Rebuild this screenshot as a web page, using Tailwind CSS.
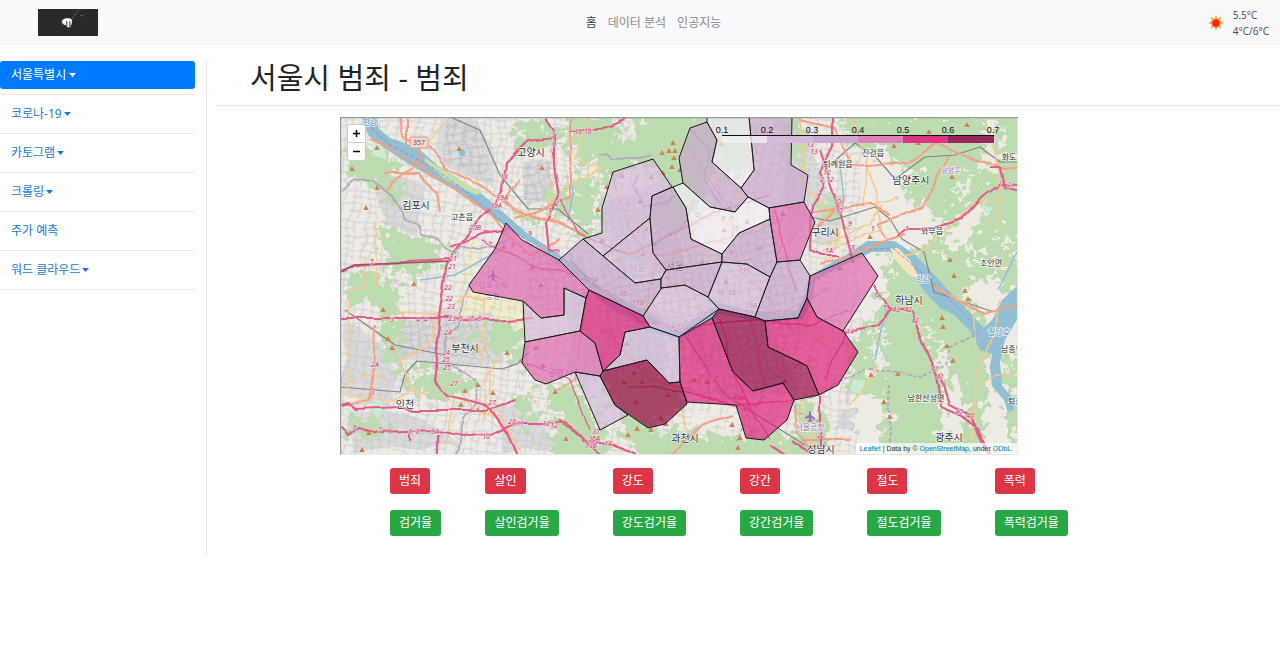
<!DOCTYPE html>
<html lang="ko">
<head>
<meta charset="utf-8">
<meta name="viewport" content="width=device-width, initial-scale=1">
<title>서울시 범죄</title>
<script src="https://cdn.jsdelivr.net/npm/@tailwindcss/browser@4"></script>
</head>
<body class="min-h-screen bg-white font-['Open_Sans','Noto_Sans_CJK_KR',sans-serif] text-xs text-[#212529]">
<header class="grid h-[45px] grid-cols-[1fr_auto_1fr] items-center bg-[#f8f9fa] pr-[11px] pl-[38px]">
  <a href="#" aria-label="홈으로" class="w-[60px]">
    <svg class="block w-full" viewBox="0 0 60 27" aria-hidden="true">
      <rect width="60" height="27" fill="#292929"/>
      <path d="M34 10l4-6 4-5" stroke="#777" stroke-width=".8" stroke-dasharray="3 1" fill="none"/>
      <path d="M42 7l3-1" stroke="#777" stroke-width=".8"/>
      <path d="M23.500 13c0-4 9-5 10.500-2 .5 3 0 5-2 8-2 0-4-1-4.500-3-2 0-4-1-4-3z" fill="#7c7c7c"/>
      <path d="M24 13c0-4 8-5 10-2l-.5 4-1 1v-4h-1.500v6h-1.500v-6h-1.500v4l-2-.5z" fill="#fff"/>
    </svg>
  </a>
  <nav class="flex gap-[11px]">
    <a href="#" class="text-[#3f4245]">홈</a>
    <a href="#" class="text-[#8b8d8f]">데이터 분석</a>
    <a href="#" class="text-[#8b8d8f]">인공지능</a>
  </nav>
  <div class="flex items-center gap-[9px] justify-self-end text-[10px] leading-4 text-[#45484b]">
    <svg class="size-4" viewBox="0 0 16 16" aria-hidden="true">
      <path d="M8 0l1.500 3.500L13.600 2l-1.400 4L16 8l-3.800 1.600 1.400 4.100-4.100-1.500L8 16l-1.500-3.800-4.100 1.500 1.400-4.100L0 8l3.800-2-1.400-4 4.100 1.500z" fill="#f8ad55"/>
      <circle cx="8" cy="8" r="4.300" fill="#ff6a22"/><circle cx="8" cy="8.300" r="3.500" fill="#f52a0c"/>
    </svg>
    <p>5.5°C<br>4°C/6°C</p>
  </div>
</header>

<div class="flex pt-4">
  <aside class="w-[207px] shrink-0 border-r border-[#e6e6e6] pr-[11px]">
    <ul class="min-h-[494px] text-[#1878d0]">
      <li class="border-b border-[#ececec] pb-[5px]"><button class="flex h-[28px] w-full items-center gap-[3px] rounded-[3px] bg-[#007bff] px-[11px] text-white">서울특별시<svg class="w-[7px] shrink-0" viewBox="0 0 7 4"><path d="M0 0h7L3.500 4z" fill="currentColor"/></svg></button></li>
      <li class="border-b border-[#ececec] py-[5px]"><button class="flex h-[28px] w-full items-center gap-[2px] px-[11px]">코로나-19<svg class="w-[7px] shrink-0" viewBox="0 0 7 4"><path d="M0 0h7L3.500 4z" fill="currentColor"/></svg></button></li>
      <li class="border-b border-[#ececec] py-[5px]"><button class="flex h-[28px] w-full items-center gap-[2px] px-[11px]">카토그램<svg class="w-[7px] shrink-0" viewBox="0 0 7 4"><path d="M0 0h7L3.500 4z" fill="currentColor"/></svg></button></li>
      <li class="border-b border-[#ececec] py-[5px]"><button class="flex h-[28px] w-full items-center gap-[2px] px-[11px]">크롤링<svg class="w-[7px] shrink-0" viewBox="0 0 7 4"><path d="M0 0h7L3.500 4z" fill="currentColor"/></svg></button></li>
      <li class="border-b border-[#ececec] py-[5px]"><a href="#" class="flex h-[28px] items-center px-[11px]">주가 예측</a></li>
      <li class="border-b border-[#ececec] py-[5px]"><button class="flex h-[28px] w-full items-center gap-[2px] px-[11px]">워드 클라우드<svg class="w-[7px] shrink-0" viewBox="0 0 7 4"><path d="M0 0h7L3.500 4z" fill="currentColor"/></svg></button></li>
    </ul>
  </aside>

  <main class="min-w-0 flex-1 pl-[9px]">
    <h1 class="border-b border-[#e5e5e5] pb-[11px] pl-[34px] text-[29px] leading-[33px] font-normal">서울시 범죄 - 범죄</h1>

    <div class="relative mt-[11px] ml-[124px] max-w-[678px]">
      <svg class="block w-full" viewBox="340 117 678 338" font-family="Noto Sans CJK KR, sans-serif" role="img" aria-label="서울시 구별 범죄 지도">
        <defs>
          <filter id="rough" x="-5%" y="-5%" width="110%" height="110%"><feTurbulence type="fractalNoise" baseFrequency=".1" numOctaves="4" seed="8" result="n"/><feDisplacementMap in="SourceGraphic" in2="n" scale="42" xChannelSelector="R" yChannelSelector="G"/></filter>
          <filter id="wave" x="-5%" y="-5%" width="110%" height="110%"><feTurbulence type="fractalNoise" baseFrequency=".03" numOctaves="2" seed="3" result="n"/><feDisplacementMap in="SourceGraphic" in2="n" scale="14" xChannelSelector="R" yChannelSelector="G"/></filter>
          <filter id="bend" x="-5%" y="-5%" width="110%" height="110%"><feTurbulence type="fractalNoise" baseFrequency=".04" numOctaves="1" seed="5" result="n"/><feDisplacementMap in="SourceGraphic" in2="n" scale="8" xChannelSelector="R" yChannelSelector="G"/></filter>
          <pattern id="grid" width="17" height="15" patternUnits="userSpaceOnUse" patternTransform="rotate(8)"><path d="M0 3h17M4 0v15M0 10h11M11 3v12" stroke="#c3c2c4" stroke-width=".7" fill="none"/></pattern>
          <pattern id="dense" width="8" height="8" patternUnits="userSpaceOnUse" patternTransform="rotate(-12)"><path d="M0 2h8M3 0v8" stroke="#b6b6ba" stroke-width=".8" fill="none"/></pattern>
          <path id="t" d="M0-3l2.800 5h-5.600z" fill="#cd8450"/>
          <path id="plane" d="M0-5l1 1v3l4 3v1l-4-1.500V4l1.500 1v1L0 5.500-2.500 6V5L-1 4V1.500L-5 3V2l4-3v-3z" fill="#8a6cc5"/>
        </defs>
        <rect x="340" y="117" width="678" height="338" fill="#eeebe5"/>

        <!-- built-up land -->
        <g fill="#dbdadb" filter="url(#wave)">
          <path d="M440 120l35 3 20 30-5 32-52-22zM523 162l22-3 8 35-25 15zM375 172l50 15-8 45-32-4zM395 320l65-12 50 5-5 50-70 5-45-12zM345 320l50 35-5 60-45-25zM350 410l70 5 40 30-110 8zM603 200l60-20 20 90-60 10zM570 290l90 20 10 60-100 10zM680 330l90-10 30 70-80 10zM780 120l30 10 15 60-35 60zM820 190l25 5-5 45-25 0zM895 285l30 5 5 20-30 5zM850 390l25 15-15 30-25-5zM930 145l25-5v15l-30 5zM495 405l40 10 30 35-60 0zM985 120l15 10v40l-15-10z"/>
        </g>
        <path d="M490 290l33 12 1 40-15 0-18-30-35 5 5-35zM471 237l-15 60 12 2 8-60z" fill="#f0edcb"/>
        <rect x="340" y="117" width="520" height="338" fill="url(#grid)" filter="url(#wave)"/>
        <path d="M445 120l35 10 10 50-45-20zM523 162h28v40h-25zM395 318h95v40h-95zM600 200l80-10 30 80 60-50 40 100-30 70-100 5-80-20zM525 240l60 20v60l-60-20z" fill="url(#dense)" filter="url(#wave)"/>

        <!-- woodland -->
        <g fill="#bddbb1" filter="url(#rough)">
          <path d="M640 112h85l-15 60-20 60-20 0-10-30 5-20-18-20-45 20-6-20 30-20zM565 118l60 0-10 35-25 15-22-20zM575 170l25 10 0 50-20 5-12-25z"/>
          <path d="M720 110h30l5 50-20 25-20-30zM785 110h15l5 55-15 5z"/>
          <path d="M835 112h190v140l-50 30-25 30 50 60-20 90h-80l-25-25 20-50-30 10-20-40 25-40 20-40-5-20 40-10 20-30-40-20-10-40-40-10z"/>
          <path d="M865 325l110-20 15 60-10 80-95 5-10-45-35-15 20-25z"/>
          <path d="M818 195l25 3-2 25-22 0zM858 120l40 0-15 20zM900 300l60-30 10 30z"/>
          <path d="M345 152l30-5 25 22-15 22-40-15zM385 175l20 12-3 20-20-5zM375 228l45 5 35 25-55 20-15-20zM345 272l50 8 2 25-50-2zM378 288l20 10 6 75-20-12zM410 372l50-5 20 25-35 10-40-8zM490 318l32 8v38l-32-8zM545 185l30 15-5 20-25-5zM520 205l15 10-10 15zM515 125l50 0-10 22-40 5z"/>
          <path d="M540 385l35-2 30 50 10 35-65 0 5-50zM602 380l50-10 30 35-30 25 80 5 80 0 10 30-180 5-20-45zM795 400l20 5 20 35-35 15zM345 420l30-5 20 20-45 5zM455 330l25 5-5 15zM520 390l15 15-5 30-15-25z"/>
          <path d="M1000 190l18-20v150l-18-30zM1005 360l15-5v90l-15-10z"/>
        </g>
        <g fill="#eeebe4" filter="url(#rough)">
          <path d="M940 235l25-25 25-10-15 30-30 25zM875 165l40 0 10 12-30 10zM965 165l10 20-12 8zM1000 228l15 15-12 3zM875 315l10 60-14-3zM925 318l25 48-12 3zM950 190l25 0-15 12zM855 255l20-10-10 20zM985 120l15 0-5 55-12-3zM940 395l20-15 10 55-25 0zM690 415l60 5-25 10-35-5zM990 330l12 100-20 5zM850 395l30 0 10 25-30 25zM960 240l20 10-5 15z"/>
        </g>
        <g fill="#c9ecd4"><path d="M372 140l12 8 3 12-14-5zM455 145l10 12-8 0zM375 395l10 12-8 12-5-10zM453 400l12 5-5 8zM500 230l8 5-3 8zM853 380l12 0-3 15-12-5zM980 205l14 3-7 7z"/></g>

        <!-- water -->
        <g fill="#92bfd3">
          <path d="M361 117L378 117 378 128 390 138 418 148 437 165 463 182 483 195 497 207 527 233 560 255 600 286 640 309 679 329 719 303 755 312 797 311 805 294 809 276 849 253 867 241 894 241 913 253 931 271 947 289 960 302 974 317 984 328 992 320 1002 300 1018 285 1018 318 1005 340 1000 362 1002 385 1014 400 1014 410 1008 412 1004 400 992 386 990 366 992 354 980 350 970 331 954 315 940 308 925 292 912 275 898 260 890 252 872 252 850 262 815 280 813 298 803 319 765 323 719 314 700 328 679 340 650 330 610 308 590 292 570 272 540 248 513 232 490 215 473 202 450 187 433 178 407 163 383 147 368 135Z"/>
          <path d="M570 168l3 25-5 28M765 375l-4 25M840 165l4 35-4 18M887 310l-6 20-6 30M1018 250l-20 40M500 250l-45 25-35 5" fill="none" stroke="#92bfd3" stroke-width="1.500"/>
          <circle cx="462" cy="153" r="3.500"/>
        </g>
        <path d="M425 158l28 18 30 17-7 2-30-15-21-18z" fill="#c8dfa9"/>
        <path d="M890 248l8 0 12 12 10 20-12-6-14-16z" fill="#f6e4c1"/>
        <path d="M366 117L373 130 390 145 430 166 460 187 500 220 550 259 600 293 679 334 719 308 797 315 810 285 860 250 893 248 930 280 975 325" fill="none" stroke="#8797bd" stroke-width="1" stroke-dasharray="4 2"/>

        <!-- administrative limits -->
        <g fill="none" stroke="#b1a0bb" stroke-width="1.800" opacity=".85" filter="url(#bend)">
          <path d="M340 190l14-12 18 3 20 15 8 12 4 12 15 5 3 10 15 3 7 10 12 5 4-8 18 4 18-5 12-4M472 280l-10 15-2 30-16 10 2 28 9 5 20 12 2 24-12 15-10 40M600 155l8-2 5 6 25-1 15-4M640 175l-5 10 10 20 20 0 10-10M690 130l20 20-5 30 15 25M695 200l-15 30"/>
          <path d="M795 400l2 15 20 5 10 30M870 370l30 2 20 5 25-12 5-18 30-15M865 370l-40 20-20 10M890 385l0 60M765 395l-20 22-8 25" stroke-dasharray="4 2"/>
        </g>
        <g fill="none" stroke="#858585" stroke-width="1.200" stroke-linejoin="round">
          <path d="M450 117l30 13 20 45 28 34h30l30 25M340 387l60 5 5-18 12-13 85 8 15-5 12-12M830 165l25-22 20 13 20 23 30-22 30-2 25-8 20 15 20 0M810 217l20 4 45-14 15 12 12 20 22 13 10 40 60 20M345 310l50 35 50 10M570 260l40 40 75 35 40 60 80 50"/>
        </g>

        <!-- secondary roads -->
        <g fill="none" stroke="#f8c98d" stroke-width="1.500" filter="url(#bend)">
          <path d="M349 300v90M375 223l2 65M349 288h15v-30M450 117l-20 25-8-2M555 165l-8 50 12 12M590 118l-15 40 28 10-40 20M395 312l50 2 18-20 20 8M485 295l-4 70M340 395l55 5 15-10 55 10 15 12 20 5 20 35M455 395l-10 50M492 370l0 50M410 390l-10-30 30-15 5-35M497 360l-10 20-2 40M345 385l20-10 20 2"/>
          <path d="M800 117l5 70 25 30M850 117l15 40-2 50 35-10M863 160l12 30 8 40-60 20M985 125l14 45 0 60M999 200l-25 3-20 22-30 25-20 5M976 385l-3 55M975 380l20-50 5-30M976 385l20-10 25-1M933 285l40 25 3 40M820 245l50-20 12-20M815 305l-10 20 20 20M850 405l30-40M830 260l10-30M800 400l15 55M735 195l10-25 0-50M690 440l-10-25-18-5"/>
        </g>
        <g fill="none" stroke="#f4a086" stroke-width="2" stroke-linejoin="round" filter="url(#bend)">
          <path d="M400 117l3 20 28 10 15 22 40 20 30 22 50 14M407 117v28M421 143l-3 20-25 18-6 10M371 140l20 10 40 25 55 35 20 22M383 173l35 0 20 20 3 20M375 325l-2 55-3 20-30 5M500 230l30 25 30-15M520 180l-15 20 8 10 40 10 40 20M515 218l55-20 0-80"/>
          <path d="M800 120l35 8 15 38 60-4 25-18 40 15 30 10 15-2M948 156l-15 30-10 20-28 10-17 8 10 15M810 213l60-10 20 10M815 230l30-30M820 265l30-10 55-20M933 285l30 20 20 7 35-5M672 455l30-30 30-10M810 450l-15-20 2-20M800 440l50 0"/>
          <path d="M560 265l40 30 80 30 40-18 60 10 50-30M603 250l60 5 60-15 60-20M610 172l20 60 50 60M690 150l40 60 10 60 55 60M605 330l45 50 40 10M585 310l-10 70-20 10M700 320l10 80M750 320l15 60 50-20M655 255l-10 70" stroke-width="1.300"/>
        </g>
        <!-- motorways -->
        <g fill="none" stroke="#e0608a" stroke-width="2.200" stroke-linejoin="round" filter="url(#bend)">
          <path d="M545 117l8 15 0 35 5 30-12 25 3 28 10 2M553 138l-25 3-22 20-3 30-10 15-25 25-12 17-10 20-5 35-5 35 2 22-3 20 12 15 40 10 20 28 14 32M340 318l112 0M340 405l8-2 8 5 45-2 10 5 75 0 30-10M340 427l8 8 12-7 18 5 60-2 30 6 22-2 26-12 50 0 15 15M570 133l25-2 25-9 10-5M438 435v20M340 272l25-8 85-4M452 318l40 3 40-3M450 246l30-13 30-4M410 432v10"/>
          <path d="M832 117l0 30-12 25 5 13-13 22-2 43 12 5 18 0M820 150l20 60 10 40 5 12M897 237l10-8 25 0 30-10 20-22 18-14 18 1M842 332l37-7 11-15-10-15-5-10M890 310l20 2 8 20 19 45 5 30 18 8 20 15 12 25M940 375l10 30 20 10 20 40M790 440l24 15M990 168l10 0 4 18 14 4M770 445l15 10M820 395l0 60M580 440l35 5 20 10M560 420l40 35"/>
          <path d="M480 240l50 25 60 15 50 40 40 10 60-10 70 5 40-15M560 200l20 35 50 20 80-40 60-20M520 360l50 20 20 50M630 385l45 5 60 15 60-5M720 320l15 60 35 58M845 330l-20 50M775 210l20 80" stroke-width="1.300"/>
        </g>
        <path d="M340 272l14-7 98-4" fill="none" stroke="#9a5268" stroke-width="1.500"/>

        <!-- peaks -->
        <g>
          <use href="#t" x="377" y="148"/><use href="#t" x="352" y="169"/><use href="#t" x="377" y="188"/><use href="#t" x="459" y="149"/><use href="#t" x="366" y="208"/><use href="#t" x="542" y="168"/><use href="#t" x="414" y="284"/><use href="#t" x="383" y="310"/><use href="#t" x="388" y="339"/><use href="#t" x="392" y="348"/><use href="#t" x="507" y="353"/><use href="#t" x="478" y="385"/><use href="#t" x="465" y="391"/><use href="#t" x="461" y="405"/><use href="#t" x="478" y="410"/><use href="#t" x="493" y="393"/><use href="#t" x="369" y="433"/><use href="#t" x="362" y="450"/>
          <use href="#t" x="673" y="143"/><use href="#t" x="662" y="153"/><use href="#t" x="669" y="151"/><use href="#t" x="675" y="151"/><use href="#t" x="674" y="158"/><use href="#t" x="672" y="167"/><use href="#t" x="680" y="170"/><use href="#t" x="663" y="173"/><use href="#t" x="622" y="176"/><use href="#t" x="651" y="177"/><use href="#t" x="640" y="202"/><use href="#t" x="670" y="234"/><use href="#t" x="655" y="244"/><use href="#t" x="602" y="241"/><use href="#t" x="643" y="254"/><use href="#t" x="702" y="262"/><use href="#t" x="724" y="230"/><use href="#t" x="747" y="222"/><use href="#t" x="760" y="248"/><use href="#t" x="783" y="214"/><use href="#t" x="721" y="144"/><use href="#t" x="598" y="210"/><use href="#t" x="607" y="187"/><use href="#t" x="726" y="282"/>
          <use href="#t" x="929" y="132"/><use href="#t" x="967" y="125"/><use href="#t" x="894" y="146"/><use href="#t" x="918" y="143"/><use href="#t" x="952" y="177"/><use href="#t" x="870" y="237"/><use href="#t" x="950" y="260"/><use href="#t" x="954" y="276"/><use href="#t" x="965" y="291"/><use href="#t" x="968" y="299"/><use href="#t" x="942" y="318"/><use href="#t" x="943" y="327"/><use href="#t" x="947" y="346"/><use href="#t" x="953" y="361"/><use href="#t" x="871" y="375"/><use href="#t" x="898" y="374"/><use href="#t" x="884" y="402"/><use href="#t" x="890" y="417"/>
          <use href="#t" x="634" y="373"/><use href="#t" x="624" y="382"/><use href="#t" x="642" y="382"/><use href="#t" x="668" y="395"/><use href="#t" x="636" y="402"/><use href="#t" x="637" y="429"/><use href="#t" x="651" y="430"/><use href="#t" x="661" y="418"/><use href="#t" x="666" y="424"/><use href="#t" x="628" y="435"/><use href="#t" x="694" y="380"/><use href="#t" x="707" y="382"/><use href="#t" x="732" y="425"/><use href="#t" x="740" y="438"/><use href="#t" x="738" y="448"/><use href="#t" x="785" y="381"/><use href="#t" x="536" y="348"/><use href="#t" x="543" y="366"/><use href="#t" x="532" y="268"/><use href="#t" x="541" y="285"/><use href="#t" x="555" y="392"/><use href="#t" x="565" y="423"/><use href="#t" x="566" y="439"/><use href="#t" x="627" y="344"/><use href="#t" x="504" y="247"/><use href="#t" x="840" y="268"/>
        </g>

        <!-- road numbers -->
        <g font-family="Open Sans, sans-serif" font-size="7" font-style="italic" fill="#b02f58" stroke="#f7e2e6" stroke-width="1.200" paint-order="stroke" text-anchor="middle">
          <text x="553" y="137">3</text><text x="553" y="146">3</text><text x="583" y="134">16 16</text><text x="504" y="179">18</text><text x="502" y="200">19A</text><text x="496" y="208">19A</text><text x="475" y="230">20B</text><text x="530" y="236">9</text><text x="557" y="206">2</text><text x="550" y="215">1</text><text x="557" y="254">6</text><text x="513" y="247">8</text><text x="490" y="247">7</text><text x="453" y="261">21</text><text x="452" y="269">21</text><text x="448" y="290">22</text><text x="449" y="301">22</text><text x="451" y="309">23</text><text x="452" y="321">23</text><text x="461" y="321">5</text><text x="476" y="321">6&#160; 6</text><text x="448" y="335">24</text><text x="446" y="355">24</text><text x="446" y="362">25</text><text x="447" y="370">25</text><text x="454" y="386">27</text><text x="492" y="405">27</text><text x="512" y="424">28</text><text x="520" y="426">11</text><text x="546" y="426">12</text><text x="554" y="428">12</text><text x="486" y="439">10</text><text x="435" y="434">9A</text><text x="414" y="434">8&#160; 8</text><text x="380" y="432">7</text><text x="355" y="430">6</text><text x="375" y="367">2A</text><text x="392" y="322">3</text><text x="422" y="322">4&#160; 4</text><text x="372" y="264">5</text><text x="373" y="396">1</text><text x="596" y="434">37</text><text x="594" y="441">36A</text><text x="591" y="448">13B</text><text x="608" y="446">14</text>
          <text x="810" y="147">13</text><text x="814" y="154">13</text><text x="827" y="175">12</text><text x="827" y="182">2.12</text><text x="837" y="204">10</text><text x="839" y="213">10</text><text x="850" y="226">9</text><text x="853" y="250">8</text><text x="873" y="231">1</text><text x="907" y="231">1</text><text x="829" y="253">1A</text><text x="1000" y="186">2</text><text x="1009" y="187">2</text><text x="877" y="297">6</text><text x="885" y="310">5</text><text x="896" y="312">43</text><text x="908" y="312">42</text><text x="915" y="323">42</text><text x="850" y="334">14</text><text x="935" y="371">41</text><text x="940" y="379">41</text><text x="959" y="414">40</text><text x="970" y="418">40</text><text x="819" y="438">2</text>
          <text x="638" y="233">3</text><text x="619" y="262">2</text><text x="646" y="232">4</text><text x="698" y="217">5</text><text x="727" y="221">6&#160; 7</text><text x="737" y="231">8</text><text x="731" y="255">9</text><text x="746" y="273">11</text><text x="594" y="282">8A</text><text x="606" y="294">9b</text><text x="623" y="296">10</text><text x="638" y="305">11B</text><text x="671" y="329">13-14-15</text><text x="704" y="316">16</text><text x="726" y="295">18&#160; 18</text><text x="751" y="308">19A</text><text x="782" y="315">21-21</text><text x="738" y="400">49A</text><text x="747" y="411">49</text>
        </g>
        <g text-anchor="middle" font-size="8" fill="#333" stroke="#fff" stroke-opacity=".75" stroke-width="1.500" paint-order="stroke">
          <g font-size="10"><text x="531" y="156">고양시</text><text x="416" y="209">김포시</text><text x="465" y="352">부천시</text><text x="405" y="408">인천</text><text x="685" y="442">과천시</text><text x="675" y="270">서울</text><text x="911" y="184">남양주시</text><text x="825" y="236">구리시</text><text x="909" y="304">하남시</text><text x="949" y="441">광주시</text><text x="821" y="453">성남시</text></g>
          <text x="462" y="220">고촌읍</text><text x="838" y="167">퇴계원읍</text><text x="873" y="156">진건읍</text><text x="1009" y="160">화도</text><text x="932" y="234">와부읍</text><text x="991" y="266">조안면</text><text x="926" y="401">남한산성면</text><text x="1012" y="352">남종면</text><text x="1019" y="404">퇴촌면</text>
          <g fill="#9a70b4"><text x="637" y="271" font-size="9">서울</text><text x="709" y="379">서초구</text><text x="560" y="376" font-size="9">광명시</text><text x="493" y="288">김포국제</text><text x="493" y="299">공항</text><text x="951" y="173" font-size="7">남양주</text><text x="810" y="430">서울공항</text></g>
          <g fill="#5c91bd"><text x="923" y="282">한강</text><text x="999" y="335">팔당호</text><text x="370" y="125">한강</text></g>
        </g>
        <use href="#plane" x="493" y="275"/><use href="#plane" x="810" y="416"/>
        <rect x="410" y="137" width="18" height="11" rx="1" fill="#f4d4cb" stroke="#dc9f90"/><text x="419" y="145" font-family="Open Sans" font-size="7" text-anchor="middle" fill="#555">357</text>

        <!-- districts -->
        <g stroke="#1c1c1c" stroke-width="1" stroke-linejoin="round" fill-opacity=".68">
          <g fill="#d4b9da">
            <path d="M523 301l18 17 23-3v-27l22 10-6 33-55 11z"/>
            <path d="M613 172l40-13 19 28-20 9-2 22-47 38-20-17 19-6v-25z"/>
            <path d="M650 218l-47 38 32 27 26-4 5-9-13-17z"/>
            <path d="M661 288l24-3 23 12 11 12-40 28-29-10-7-11z"/>
            <path d="M722 262l25 2 23 13-15 40-36-8-11-12z"/>
            <path d="M650 327l29 10 1 45-11 1-22-23-44 11 17-16 5-23z"/>
            <path d="M575 372l25 4 15 29 13 10-28 15z"/>
          </g>
          <g fill="#c9a5cd">
            <path d="M583 239l52 44 26-4v10l-18 27-54-26-30-30z"/>
            <path d="M652 196l21-9 13 21 5 31 31 15v8l-56 8-13-17-3-35z"/>
            <path d="M666 270l56-8-14 35-23-12-24 3v-9z"/>
            <path d="M690 128l17-6 10 18-5 22 29 26 7 9-13 15-25-5-27-24-4-25z"/>
            <path d="M770 219l7 43-7 15-23-13-25-2v-8l17-21z"/>
            <path d="M749 117h43l-1 48 17 10-4 27-35 6-21-11-7-9 13-18z"/>
            <path d="M770 277l7-15 23-2 10 16-3 22-9 20-33 3-10-4z"/>
          </g>
          <g fill="#f1eef6">
            <path d="M673 187l10-4 27 24 25 5 13-15 21 11 1 11-31 14-17 21-31-15-5-31z"/>
            <path d="M707 117h42l5 53-13 18-29-26 5-22-10-18z"/>
          </g>
          <g fill="#df65b0">
            <path d="M506 223l16 17 37 20 30 30-3 8-22-10v27l-23 3-18-17-50-9-4-7 26-36z"/>
            <path d="M525 342l55-11 15 12 8 28-3 5-25-4-29 12-11-4-13-17z"/>
            <path d="M769 208l35-6 11 20-15 38-23 2-7-43z"/>
            <path d="M810 276l52-23 16 23-35 55-26-14-10-19z"/>
          </g>
          <g fill="#dd1c77">
            <path d="M589 290l54 26 7 11-25 5-5 23-17 16-8-28-15-12 6-33z"/>
            <path d="M765 321l33-3 9-20 10 19 26 14 15 21-20 33-19 10-12-29-39-19z"/>
            <path d="M712 318l21 54 20 19 30-8 11 17-7 20-23 20-18-2-10-33-49-3-7-20-1-45z"/>
          </g>
          <g fill="#980043">
            <path d="M719 309l36 8 10 4 3 26 32 15 7 4 12 29-25 5-11-17-30 8-20-19-21-54z"/>
            <path d="M603 371l44-11 22 23 11-1 7 22-22 20-17 4-33-23-15-29z"/>
          </g>
        </g>

        <!-- colour scale -->
        <g><path d="M722 135h45v8h-45z" fill="#f1eef6" opacity=".8"/><path d="M767 135h46v8h-46z" fill="#d4b9da"/><path d="M813 135h45v8h-45z" fill="#cda8d0"/><path d="M858 135h45v8h-45z" fill="#df80b9"/><path d="M903 135h45v8h-45z" fill="#dd3483"/><path d="M948 135h46v8h-46z" fill="#98275b"/><path d="M722 135.500h272" stroke="#111"/>
          <g font-family="Liberation Sans, sans-serif" font-size="9" text-anchor="middle" fill="#111"><text x="722" y="133">0.1</text><text x="767" y="133">0.2</text><text x="812" y="133">0.3</text><text x="858" y="133">0.4</text><text x="903" y="133">0.5</text><text x="948" y="133">0.6</text><text x="993" y="133">0.7</text></g>
        </g>
        <path d="M1017.500 117v337.500H340" fill="none" stroke="#e8e8e8"/>
        <path d="M340.500 455V117.500H1018" fill="none" stroke="#929b98" stroke-width="1.500"/>
      </svg>
      <div class="absolute top-[7px] left-[7px] flex w-[19px] flex-col rounded-[3px] border border-black/20 bg-white text-black">
        <button aria-label="확대" class="flex h-[18px] items-center justify-center border-b border-[#ccc]"><svg class="size-[7px]" viewBox="0 0 7 7"><path d="M0 3.500h7M3.500 0v7" stroke="currentColor" stroke-width="1.500"/></svg></button>
        <button aria-label="축소" class="flex h-[17px] items-center justify-center"><svg class="size-[7px]" viewBox="0 0 7 7"><path d="M0 3.500h7" stroke="currentColor" stroke-width="1.500"/></svg></button>
      </div>
      <p class="absolute right-px bottom-px bg-white/70 px-1 font-['Liberation_Sans',sans-serif] text-[7px] leading-[11px] text-[#333]"><a href="#" class="text-[#0078a8]">Leaflet</a> | Data by © <a href="#" class="text-[#0078a8]">OpenStreetMap</a>, under <a href="#" class="text-[#0078a8]">ODbL</a>.</p>
    </div>

    <div class="mt-[13px] ml-[174px] grid max-w-[732px] grid-cols-[3fr_4fr_4fr_4fr_4fr_4fr] justify-items-start gap-y-4 whitespace-nowrap text-white">
      <button class="h-[26px] rounded-[3px] bg-[#dc3545] px-[9px]">범죄</button>
      <button class="h-[26px] rounded-[3px] bg-[#dc3545] px-[9px]">살인</button>
      <button class="h-[26px] rounded-[3px] bg-[#dc3545] px-[9px]">강도</button>
      <button class="h-[26px] rounded-[3px] bg-[#dc3545] px-[9px]">강간</button>
      <button class="h-[26px] rounded-[3px] bg-[#dc3545] px-[9px]">절도</button>
      <button class="h-[26px] rounded-[3px] bg-[#dc3545] px-[9px]">폭력</button>
      <button class="h-[26px] rounded-[3px] bg-[#28a745] px-[9px]">검거율</button>
      <button class="h-[26px] rounded-[3px] bg-[#28a745] px-[9px]">살인검거율</button>
      <button class="h-[26px] rounded-[3px] bg-[#28a745] px-[9px]">강도검거율</button>
      <button class="h-[26px] rounded-[3px] bg-[#28a745] px-[9px]">강간검거율</button>
      <button class="h-[26px] rounded-[3px] bg-[#28a745] px-[9px]">절도검거율</button>
      <button class="h-[26px] rounded-[3px] bg-[#28a745] px-[9px]">폭력검거율</button>
    </div>
  </main>
</div>
</body>
</html>
